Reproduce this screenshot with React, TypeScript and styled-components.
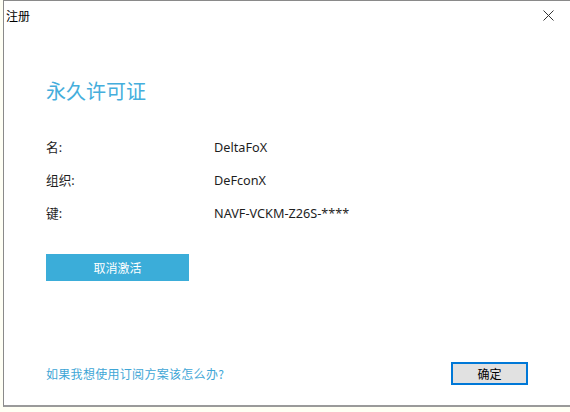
import React from "react";
import styled, { createGlobalStyle } from "styled-components";

const Global = createGlobalStyle`
  html, body { margin: 0; padding: 0; background: #fffff4; }
  body { font-family: "Noto Sans", "Noto Sans CJK SC", sans-serif; }
`;

const Window = styled.div`
  box-sizing: border-box;
  margin-left: 3px;
  width: 567px;
  height: 407px;
  background: #ffffff;
  border-left: 1px solid #8a8a8a;
  border-top: 1px solid #8a8a8a;
  border-bottom: 2px solid #9a9a9a;
  display: flex;
  flex-direction: column;
`;

const TitleBar = styled.div`
  height: 28px;
  display: flex;
  align-items: center;
  justify-content: space-between;
  padding: 0 10px 0 2px;
`;

const Title = styled.span`
  font-family: "Noto Sans CJK SC", sans-serif;
  font-size: 12px;
  color: #000;
`;

const Close = styled.div`
  width: 24px;
  height: 24px;
  display: flex;
  align-items: center;
  justify-content: center;
`;

const Body = styled.div`
  flex: 1;
  display: flex;
  flex-direction: column;
  padding: 0 42px;
`;

const Heading = styled.h1`
  margin: 48px 0 0 0;
  font-family: "Noto Sans CJK SC", sans-serif;
  font-weight: 400;
  font-size: 20px;
  line-height: 28px;
  color: #45aedc;
`;

const InfoGrid = styled.div`
  margin-top: 32px;
  display: grid;
  grid-template-columns: 168px auto;
  row-gap: 13px;
`;

const Cell = styled.div`
  font-family: "Noto Sans", "Noto Sans CJK SC", sans-serif;
  font-size: 12.7px;
  line-height: 20px;
  color: #1e1e1e;
`;

const PrimaryButton = styled.button`
  margin-top: 31px;
  width: 143px;
  height: 27px;
  border: none;
  background: #3badd9;
  color: #ffffff;
  font-family: "Noto Sans CJK SC", sans-serif;
  font-size: 12px;
  padding: 0;
`;

const Footer = styled.div`
  margin-top: auto;
  margin-bottom: 20px;
  display: flex;
  align-items: center;
  justify-content: space-between;
`;

const Link = styled.a`
  font-family: "Noto Sans CJK SC", sans-serif;
  font-size: 12px;
  letter-spacing: 0.3px;
  color: #3ea6d6;
  text-decoration: none;
`;

const OkButton = styled.button`
  box-sizing: border-box;
  width: 77px;
  height: 23px;
  background: #e1e1e1;
  border: 2px solid #0078d7;
  font-family: "Noto Sans CJK SC", sans-serif;
  font-size: 12px;
  color: #000;
  padding: 0;
`;

const rows: [string, string][] = [
  ["名:", "DeltaFoX"],
  ["组织:", "DeFconX"],
  ["键:", "NAVF-VCKM-Z26S-****"],
];

export default function App() {
  return (
    <>
      <Global />
      <Window>
        <TitleBar>
          <Title>注册</Title>
          <Close>
            <svg width="11" height="11" viewBox="0 0 11 11">
              <path d="M0.5 0.5 L10.5 10.5 M10.5 0.5 L0.5 10.5" stroke="#333" strokeWidth="1" />
            </svg>
          </Close>
        </TitleBar>
        <Body>
          <Heading>永久许可证</Heading>
          <InfoGrid>
            {rows.map(([k, v]) => (
              <React.Fragment key={k}>
                <Cell>{k}</Cell>
                <Cell>{v}</Cell>
              </React.Fragment>
            ))}
          </InfoGrid>
          <PrimaryButton>取消激活</PrimaryButton>
          <Footer>
            <Link href="#">如果我想使用订阅方案该怎么办?</Link>
            <OkButton>确定</OkButton>
          </Footer>
        </Body>
      </Window>
    </>
  );
}
